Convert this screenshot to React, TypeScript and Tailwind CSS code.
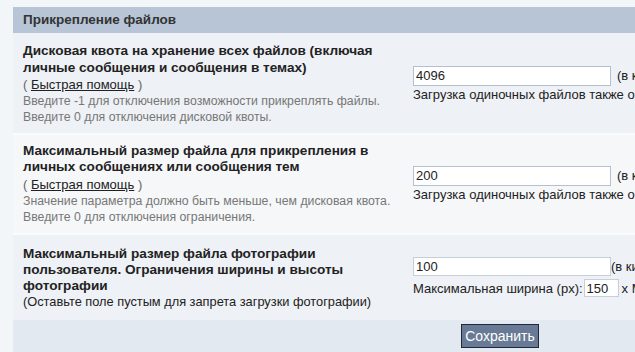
export default function App() {
  return (
    <div className="w-[635px] h-[352px] overflow-hidden bg-[#f3f6f9] pt-[7px] pl-[13px] font-['Liberation_Sans',Arial,sans-serif] text-[13px] text-[#222]">
      <div className="w-[974px]">
        <div className="h-[26px] bg-[#b7c5d6] px-[10px] flex items-center font-bold text-[13.5px] text-[#333]">
          Прикрепление файлов
        </div>

        <div className="flex flex-col gap-[2px] bg-[#fafbfc]">
          <div className="h-[100px] bg-[#eef1f5] flex items-center">
            <div className="w-[400px] pl-[10px] pr-[8px]">
              <div className="font-bold text-[13.6px] leading-[17px]">
                Дисковая квота на хранение всех файлов (включая личные сообщения и сообщения в темах)
              </div>
              <div className="leading-[17px] text-[#666]">
                ( <span className="underline text-[#222]">Быстрая помощь</span> )
              </div>
              <div className="text-[12.3px] leading-[16px] text-[#777]">
                Введите -1 для отключения возможности прикреплять файлы.
                <br />
                Введите 0 для отключения дисковой квоты.
              </div>
            </div>
            <div className="flex-1 pt-[2px]">
              <div className="flex items-center">
                <input
                  defaultValue="4096"
                  className="w-[198px] h-[20px] px-[2px] bg-white border border-[#b3c0d0] text-[13px] outline-none"
                />
                <span className="ml-[6px] whitespace-nowrap">(в килобайтах)</span>
              </div>
              <div className="leading-[17px] whitespace-nowrap">
                Загрузка одиночных файлов также ограничена настройками PHP
              </div>
            </div>
          </div>

          <div className="h-[98px] bg-[#f6f7f9] flex items-center">
            <div className="w-[400px] pl-[10px] pr-[8px]">
              <div className="font-bold text-[13.6px] leading-[16px]">
                Максимальный размер файла для прикрепления в личных сообщениях или сообщения тем
              </div>
              <div className="leading-[17px] text-[#666] mt-[1px]">
                ( <span className="underline text-[#222]">Быстрая помощь</span> )
              </div>
              <div className="text-[12.3px] leading-[16px] text-[#777]">
                Значение параметра должно быть меньше, чем дисковая квота.
                <br />
                Введите 0 для отключения ограничения.
              </div>
            </div>
            <div className="flex-1">
              <div className="flex items-center">
                <input
                  defaultValue="200"
                  className="w-[198px] h-[20px] px-[2px] bg-white border border-[#b3c0d0] text-[13px] outline-none"
                />
                <span className="ml-[6px] whitespace-nowrap">(в килобайтах)</span>
              </div>
              <div className="leading-[17px] whitespace-nowrap">
                Загрузка одиночных файлов также ограничена настройками PHP
              </div>
            </div>
          </div>

          <div className="h-[85px] bg-[#eef1f5] flex items-center">
            <div className="w-[400px] pl-[10px] pr-[8px]">
              <div className="font-bold text-[13.6px] leading-[16px]">
                Максимальный размер файла фотографии пользователя. Ограничения ширины и высоты фотографии
              </div>
              <div className="text-[12.8px] leading-[16px]">
                (Оставьте поле пустым для запрета загрузки фотографии)
              </div>
            </div>
            <div className="flex-1">
              <div className="flex items-center">
                <input
                  defaultValue="100"
                  className="w-[198px] h-[19px] px-[2px] bg-white border border-[#c5cfdc] text-[13px] outline-none"
                />
                <span className="whitespace-nowrap">(в килобайтах)</span>
              </div>
              <div className="flex items-center whitespace-nowrap mt-[2px]">
                <span>Максимальная ширина (px):</span>
                <input
                  defaultValue="150"
                  className="w-[35px] h-[18px] px-[2px] ml-[1px] bg-white border border-[#c5cfdc] text-[13px] outline-none"
                />
                <span className="ml-[3px]">x Максимальная высота (px):</span>
              </div>
            </div>
          </div>
        </div>

        <div className="h-[40px] bg-[#e3e9f1] flex justify-center pt-[4px]">
          <button className="h-[24px] w-[78px] bg-[#687a96] border border-[#1e2838] text-white text-[14px] leading-none">
            Сохранить
          </button>
        </div>
      </div>
    </div>
  );
}
